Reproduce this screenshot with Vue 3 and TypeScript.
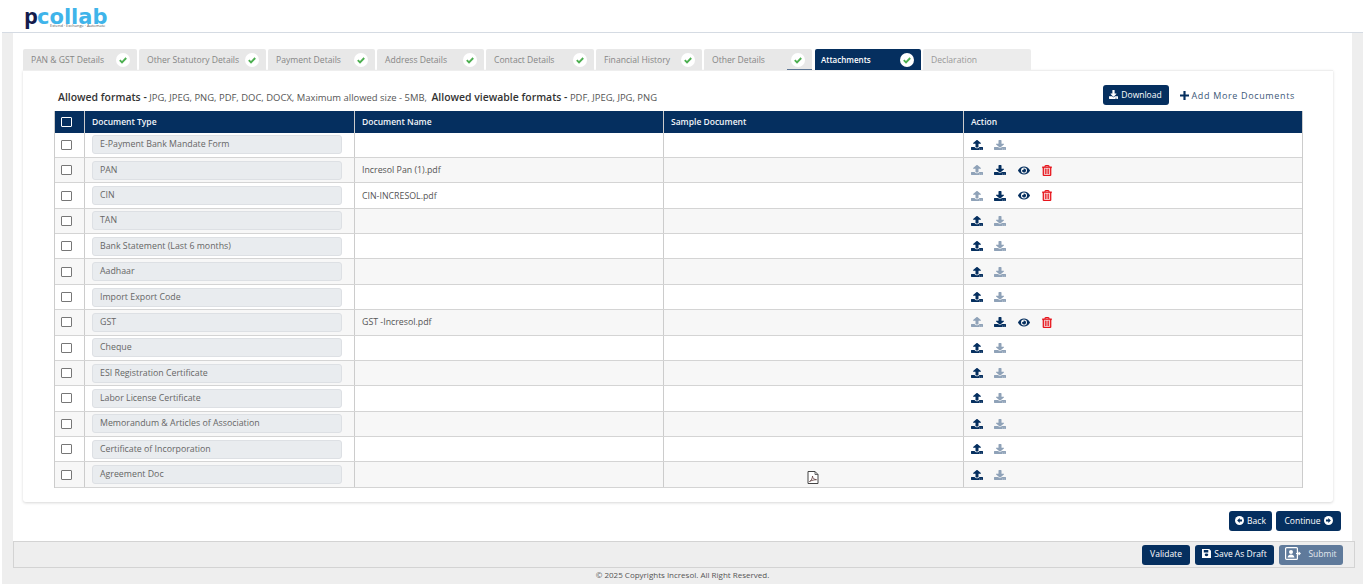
<script setup lang="ts">
interface Row { type: string; name: string; sample?: boolean }

const tabs: string[] = [
  'PAN & GST Details', 'Other Statutory Details', 'Payment Details', 'Address Details',
  'Contact Details', 'Financial History', 'Other Details', 'Attachments',
]

const rows: Row[] = [
  { type: 'E-Payment Bank Mandate Form', name: '' },
  { type: 'PAN', name: 'Incresol Pan (1).pdf' },
  { type: 'CIN', name: 'CIN-INCRESOL.pdf' },
  { type: 'TAN', name: '' },
  { type: 'Bank Statement (Last 6 months)', name: '' },
  { type: 'Aadhaar', name: '' },
  { type: 'Import Export Code', name: '' },
  { type: 'GST', name: 'GST -Incresol.pdf' },
  { type: 'Cheque', name: '' },
  { type: 'ESI Registration Certificate', name: '' },
  { type: 'Labor License Certificate', name: '' },
  { type: 'Memorandum & Articles of Association', name: '' },
  { type: 'Certificate of Incorporation', name: '' },
  { type: 'Agreement Doc', name: '', sample: true },
]

const uploadPath = 'M296 384h-80c-13.3 0-24-10.7-24-24V192h-87.7c-17.8 0-26.7-21.5-14.1-34.1L242.3 5.7c7.5-7.5 19.8-7.5 27.3 0l152.2 152.2c12.6 12.6 3.7 34.1-14.1 34.1H320v168c0 13.3-10.7 24-24 24zm216-8v112c0 13.3-10.7 24-24 24H24c-13.3 0-24-10.7-24-24V376c0-13.3 10.7-24 24-24h136v8c0 30.9 25.1 56 56 56h80c30.9 0 56-25.1 56-56v-8h136c13.3 0 24 10.7 24 24zm-124 88c0-11-9-20-20-20s-20 9-20 20 9 20 20 20 20-9 20-20zm64 0c0-11-9-20-20-20s-20 9-20 20 9 20 20 20 20-9 20-20z'
const downloadPath = 'M216 0h80c13.3 0 24 10.7 24 24v168h87.7c17.8 0 26.7 21.5 14.1 34.1L269.7 378.3c-7.5 7.5-19.8 7.5-27.3 0L90.1 226.1c-12.6-12.6-3.7-34.1 14.1-34.1H192V24c0-13.3 10.7-24 24-24zm296 376v112c0 13.3-10.7 24-24 24H24c-13.3 0-24-10.7-24-24V376c0-13.3 10.7-24 24-24h146.7l49 49c20.1 20.1 52.5 20.1 72.6 0l49-49H488c13.3 0 24 10.7 24 24zm-124 88c0-11-9-20-20-20s-20 9-20 20 9 20 20 20 20-9 20-20zm64 0c0-11-9-20-20-20s-20 9-20 20 9 20 20 20 20-9 20-20z'
const eyePath = 'M572.52 241.4C518.29 135.59 410.93 64 288 64S57.68 135.64 3.48 241.41a32.35 32.35 0 0 0 0 29.19C57.71 376.41 165.07 448 288 448s230.32-71.64 284.52-177.41a32.35 32.35 0 0 0 0-29.19zM288 400a144 144 0 1 1 144-144 143.93 143.93 0 0 1-144 144zm0-240a95.31 95.31 0 0 0-25.31 3.79 47.85 47.85 0 0 1-66.9 66.9A95.78 95.78 0 1 0 288 160z'
const trashPath = 'M268 416h24a12 12 0 0 0 12-12V188a12 12 0 0 0-12-12h-24a12 12 0 0 0-12 12v216a12 12 0 0 0 12 12zM432 80h-82.41l-34-56.7A48 48 0 0 0 274.41 0H173.59a48 48 0 0 0-41.16 23.3L98.41 80H16A16 16 0 0 0 0 96v16a16 16 0 0 0 16 16h16v336a48 48 0 0 0 48 48h288a48 48 0 0 0 48-48V128h16a16 16 0 0 0 16-16V96a16 16 0 0 0-16-16zM171.84 50.91A6 6 0 0 1 177 48h94a6 6 0 0 1 5.15 2.91L293.61 80H154.39zM368 464H80V128h288zm-212-48h24a12 12 0 0 0 12-12V188a12 12 0 0 0-12-12h-24a12 12 0 0 0-12 12v216a12 12 0 0 0 12 12z'
</script>

<template>
  <div class="page">
    <header class="top">
      <div class="logo">
        <div class="logo-row"><span class="logo-p">p</span><span class="logo-word">collab</span></div>
        <div class="logo-tag">Extend · Exchange · Automate</div>
      </div>
    </header>

    <div class="shell">
      <main class="content">
        <nav class="tabs">
          <div v-for="(t, i) in tabs" :key="t" class="tab" :class="{ active: i === 7, marked: i === 6 }">
            <span>{{ t }}</span>
            <svg class="check" viewBox="0 0 14 14" width="14" height="14">
              <circle cx="7" cy="7" r="7" fill="#fff" />
              <path d="M3.8 7.2l2.2 2.2 4.2-4.4" fill="none" stroke="#4caf50" stroke-width="1.9" />
            </svg>
          </div>
          <div class="tab disabled"><span>Declaration</span></div>
        </nav>

        <section class="card">
          <div class="toolbar">
            <p class="note">
              <b>Allowed formats -</b> JPG, JPEG, PNG, PDF, DOC, DOCX, Maximum allowed size - 5MB,
              <b class="second">Allowed viewable formats -</b> PDF, JPEG, JPG, PNG
            </p>
            <button class="btn dl">
              <svg viewBox="0 0 512 512" width="9" height="9"><path :d="downloadPath" fill="currentColor" /></svg>
              Download
            </button>
            <a class="add">
              <svg viewBox="0 0 10 10" width="9" height="9"><path d="M3.8 0h2.4v3.8H10v2.4H6.200V10H3.800V6.200H0V3.800h3.800z" fill="currentColor" /></svg>
              Add More Documents
            </a>
          </div>

          <div class="table">
            <div class="tr head">
              <div class="td first"><span class="box head-box"></span></div>
              <div class="td">Document Type</div>
              <div class="td">Document Name</div>
              <div class="td">Sample Document</div>
              <div class="td">Action</div>
            </div>
            <div v-for="r in rows" :key="r.type" class="tr">
              <div class="td first"><span class="box"></span></div>
              <div class="td"><div class="field">{{ r.type }}</div></div>
              <div class="td">{{ r.name }}</div>
              <div class="td sample">
                <svg v-if="r.sample" class="pdf" viewBox="0 0 12 13" width="12" height="13">
                  <path d="M1 .5h7l3 3v9H1z" fill="#fff" stroke="#444" stroke-width="1" />
                  <path d="M8 .5v3h3" fill="none" stroke="#444" stroke-width=".8" />
                  <path d="M2.500 10.500c2-1 3-3.500 3-5.500 0 2 1.500 3.500 4 3.700-2 0-5 .6-7 1.800z" fill="none" stroke="#6b4a4a" stroke-width=".9" />
                </svg>
              </div>
              <div class="td actions">
                <svg viewBox="0 0 512 512" preserveAspectRatio="none" width="12" height="10" :class="r.name ? 'faded' : 'solid'"><path :d="uploadPath" fill="currentColor" /></svg>
                <svg viewBox="0 0 512 512" preserveAspectRatio="none" width="12" height="10" :class="r.name ? 'solid' : 'faded'"><path :d="downloadPath" fill="currentColor" /></svg>
                <template v-if="r.name">
                  <svg viewBox="0 0 576 512" width="12" height="11" class="solid eye"><path :d="eyePath" fill="currentColor" /></svg>
                  <svg viewBox="0 0 448 512" width="10" height="11" class="red trash"><path :d="trashPath" fill="currentColor" stroke="currentColor" stroke-width="18" /></svg>
                </template>
              </div>
            </div>
          </div>
        </section>

        <div class="nav-btns">
          <button class="btn back">
            <svg viewBox="0 0 10 10" width="9" height="9"><circle cx="5" cy="5" r="5" fill="#fff" /><path d="M5.200 2.200L2.400 5l2.800 2.800V6h2.600V4H5.200z" fill="#052f5f" /></svg>
            Back
          </button>
          <button class="btn cont">
            Continue
            <svg viewBox="0 0 10 10" width="9" height="9"><circle cx="5" cy="5" r="5" fill="#fff" /><path d="M4.800 2.200L7.600 5 4.800 7.800V6H2.200V4h2.600z" fill="#052f5f" /></svg>
          </button>
        </div>
      </main>

      <div class="bar">
        <button class="btn validate">Validate</button>
        <button class="btn draft">
          <svg viewBox="0 0 10 10" width="9" height="9"><path d="M0 0h8l2 2v8H0zM2 1v3h5V1zM3 6.500a2 1.500 0 1 0 4 0 2 1.500 0 1 0-4 0z" fill="#fff" fill-rule="evenodd" /></svg>
          Save As Draft
        </button>
        <button class="btn submit">
          <svg viewBox="0 0 16 13" width="16" height="13"><rect x=".6" y=".6" width="11.800" height="11.800" rx="1" fill="none" stroke="#fff" stroke-width="1.200" /><circle cx="6" cy="5" r="2" fill="#fff" /><path d="M2.500 10.500c.3-2 1.800-3 3.500-3s3.200 1 3.500 3z" fill="#fff" /><path d="M11 6.500h4M13.500 4.800l1.800 1.700-1.800 1.700" fill="none" stroke="#fff" stroke-width="1.100" /></svg>
          Submit
        </button>
      </div>

      <footer class="copy">© 2025 Copyrights Incresol. All Right Reserved.</footer>
    </div>
  </div>
</template>

<style>
html, body { margin: 0; background: #fff; overflow: hidden; }
</style>

<style scoped>
.page {
  width: 1363px;
  height: 584px;
  overflow: hidden;
  font-family: "Open Sans", "Liberation Sans", sans-serif;
  font-size: 9px;
  color: #555;
}
.top { box-sizing: border-box; height: 32px; background: #fff; padding: 7px 0 0 24px; }
.logo-row { display: flex; align-items: baseline; height: 17px; }
.logo-p { font: 700 22px/17px "Open Sans", sans-serif; color: #141c4d; width: 13px; }
.logo-word { font: 700 21px/17px "DejaVu Sans", sans-serif; color: #3fb4ea; }
.logo-tag { margin-left: 26px; font-size: 4px; line-height: 4px; color: #555; white-space: nowrap; }

.shell {
  margin-left: 2px;
  height: 552px;
  padding: 0 0 0 11px;
  background: #eee;
  border-top: 1px solid #d5dbe3;
  border-bottom: 1px solid #d0d0d0;
}
.content {
  box-sizing: border-box;
  width: 1339px;
  height: 508px;
  padding: 16px 11px 0 10px;
  background: #fff;
}
.tabs {
  display: grid;
  grid-template-columns: 114px 127px 107px 107px 108px 106px 108px 107px 108px;
  column-gap: 2px;
  height: 21px;
}
.tab {
  display: flex;
  align-items: center;
  justify-content: space-between;
  padding: 0 7px 0 8px;
  background: #e8e8e8;
  color: #868686;
  font-size: 8.600px;
  border-radius: 2px 2px 0 0;
  position: relative;
}
.tab.marked::after {
  content: "";
  position: absolute;
  right: 0;
  bottom: 0;
  width: 25px;
  height: 1px;
  background: #5d7695;
}
.tab.active { background: #052f5f; color: #fff; padding-left: 6px; margin-left: 1px; font-size: 8px; font-weight: 600; }
.tab.disabled { background: #ececec; color: #999; }

.card {
  box-sizing: border-box;
  width: 1310px;
  height: 432px;
  padding: 14px 30px 0 31px;
  background: #fff;
  border-top: 1px solid #eee;
  border-radius: 0 0 3px 3px;
  box-shadow: 0 1px 3px rgba(0, 0, 0, .16);
}
.toolbar { display: flex; align-items: center; height: 20px; margin-bottom: 6px; }
.note { margin: 0 0 0 4px; padding-top: 4px; flex: 1; font-size: 9.450px; color: #555; white-space: nowrap; }
.note b { font-size: 10.450px; font-weight: 600; color: #333; }
.note .second { margin-left: 2px; }

.btn {
  display: inline-flex;
  align-items: center;
  justify-content: center;
  gap: 3px;
  box-sizing: border-box;
  height: 20px;
  padding: 0 0 2px;
  border: 0;
  border-radius: 3px;
  background: #052f5f;
  color: #fff;
  font: 500 8.500px "Open Sans", sans-serif;
}
.dl { width: 66px; }
.add {
  display: inline-flex;
  align-items: center;
  gap: 3px;
  margin: 0 8px 0 11px;
  color: #3d5878;
  font-size: 9px;
  font-weight: 500;
  letter-spacing: .65px;
}
.add svg { color: #052f5f; }

.table { border-left: 1px solid #ccc; border-right: 1px solid #ccc; width: 1249px; box-sizing: border-box; }
.tr {
  display: grid;
  grid-template-columns: 30px 270px 309px 300px 1fr;
  height: 25.360px;
  box-sizing: border-box;
  border-bottom: 1px solid #d4d4d4;
  background: #fff;
}
.tr:nth-child(odd) { background: #f7f7f7; }
.tr.head {
  height: 21.700px;
  background: #052f5f;
  font-weight: 600;
  border-bottom: 0;
}
.td {
  display: flex;
  align-items: center;
  padding: 0 7px;
  border-right: 1px solid #ccc;
  font-size: 8.800px;
  color: #555;
  min-width: 0;
}
.head .td { color: #f2f5f9; font-size: 8.500px; }
.td:last-child { border-right: 0; }
.td.first { padding: 0 0 0 6px; }
.box {
  display: block;
  width: 9px;
  height: 8px;
  border: 1px solid #777;
  border-radius: 1px;
  background: #fff;
}
.head-box { border-color: #fff; background: transparent; }
.field {
  box-sizing: border-box;
  width: 250px;
  height: 19px;
  line-height: 16px;
  padding-left: 7px;
  background: #e9ecef;
  border: 1px solid #dde0e4;
  border-radius: 3px;
  color: #666;
}
.sample { justify-content: center; padding: 5px 10px 0 8px; }
.actions { gap: 11px; padding: 0 0 0 7px; }
.actions svg { display: block; }
.actions .eye { margin-left: 1px; }
.actions .trash { margin-left: 1px; }
.solid { color: #052f5f; }
.faded { color: #8fa2b8; }
.red { color: #e8141c; }

.nav-btns { display: flex; justify-content: flex-end; gap: 4px; margin-top: 9px; }
.back { width: 43px; }
.cont { width: 65px; }

.bar {
  box-sizing: border-box;
  display: flex;
  justify-content: flex-end;
  align-items: center;
  gap: 5px;
  width: 1342px;
  height: 27px;
  padding-right: 11px;
  background: #eee;
  border: 1px solid #d3d3d3;
}
.validate { width: 48px; }
.draft { width: 79px; }
.submit { width: 64px; background: #5f7a9b; color: #e4e9ef; gap: 7px; }

.copy { width: 1339px; height: 14px; line-height: 14px; text-align: center; font-size: 8px; color: #555; }
</style>
